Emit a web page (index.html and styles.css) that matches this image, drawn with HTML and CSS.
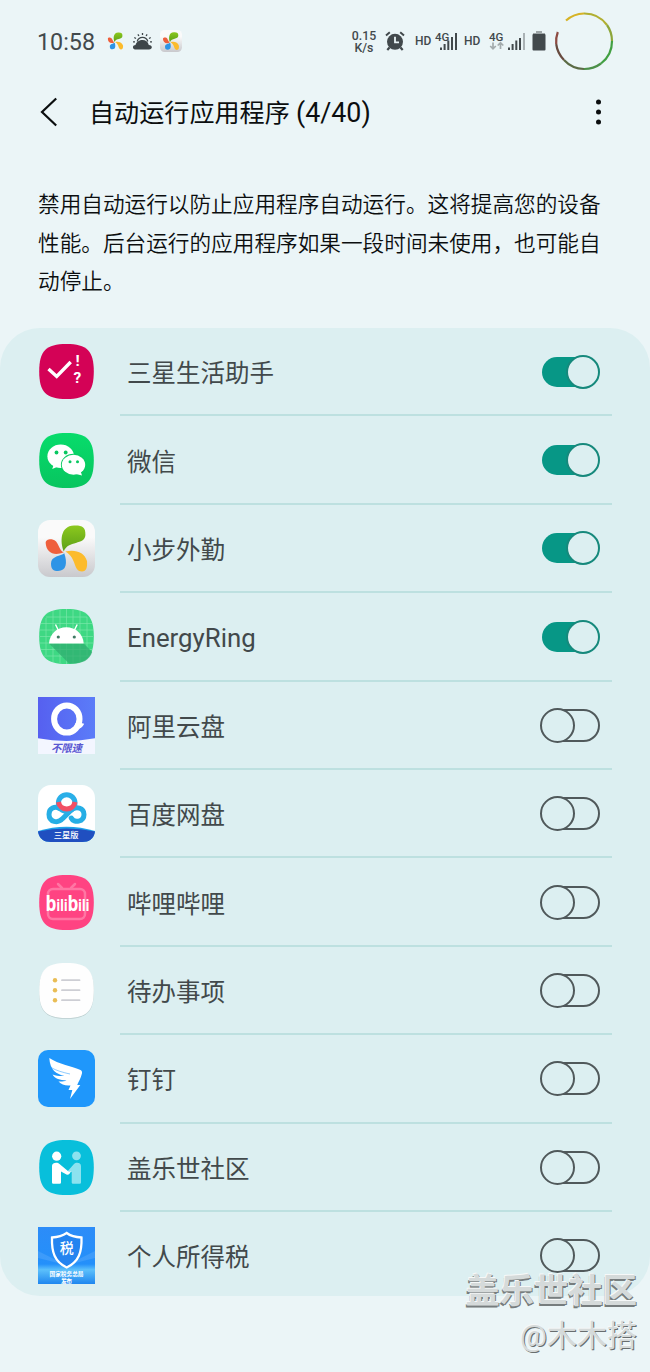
FILE: index.html
```html
<!DOCTYPE html>
<html lang="zh-CN">
<head>
    <meta charset="UTF-8">
    <meta name="viewport" content="width=device-width, initial-scale=1.0">
    <title>自动运行应用程序</title>
    <link rel="stylesheet" href="styles.css">
</head>
<body>
    <!-- 公用图形 -->
    <svg class="defs" width="0" height="0">
        <defs>
            <path id="squircle" d="M28.5 1C49 1 55.8 8 55.8 28.5S49 56 28.5 56 1.2 49 1.2 28.5 8 1 28.5 1z"/>
            <linearGradient id="silver" x1="0" y1="0" x2="0" y2="1"><stop offset=".3" stop-color="#fafafa"/><stop offset="1" stop-color="#c9c9cd"/></linearGradient>
            <linearGradient id="green" x1="0" y1="0" x2="0" y2="1"><stop offset="0" stop-color="#8cc81e"/><stop offset="1" stop-color="#5b9f18"/></linearGradient>
            <linearGradient id="wechat" x1="0" y1="0" x2="0" y2="1"><stop offset="0" stop-color="#07dc6b"/><stop offset="1" stop-color="#08c55f"/></linearGradient>
            <linearGradient id="pan" x1="0" y1="0" x2="1" y2="0"><stop offset="0" stop-color="#5660f0"/><stop offset="1" stop-color="#5b7cf8"/></linearGradient>
            <linearGradient id="tax" x1="0" y1="0" x2="0" y2="1"><stop offset="0" stop-color="#2c8cf8"/><stop offset=".65" stop-color="#2490fa"/><stop offset=".75" stop-color="#5cc0fb"/><stop offset="1" stop-color="#1f86ef"/></linearGradient>
            <g id="petals">
                <path fill="url(#green)" d="M25.8 31.5C22 22 22 6 36 5.6c8-.3 11.8 1.5 11.4 9.4C46.8 25.5 30 20 25.8 31.5z"/>
                <path fill="#ef5f3c" d="M25.8 32.3C21 31 20.5 20 14.5 19.4c-4-.5-7 .8-6.8 3.8C8.3 32 15.5 36.8 25.8 32.3z"/>
                <path fill="#2e94e6" d="M26.3 33.3C23 36 13 36 13 43.5c0 6 2.5 7.5 7 7.5 8.5 0 9.5-8 6.3-17.7z"/>
                <path fill="#fcbb2c" d="M27.3 31.5C37 29 46.5 32 49 41c.5 6-.5 10.5-5 10.5C35 51.5 39 38 27.3 31.5z"/>
            </g>
        </defs>
    </svg>

    <!-- 状态栏 -->
    <header class="status-bar">
        <div class="status-left">
            <span class="clock">10:58</span>
            <svg class="mini-petals" viewBox="6 4 45 49"><use href="#petals"/></svg>
            <svg class="weather" viewBox="0 0 19 17">
                <path d="M4.2 8.5a5.5 5.5 0 0 1 10.6 0" fill="none" stroke="#3e4649" stroke-width="1.3"/>
                <path d="M9.5 0v2M4.9 1.3l1 1.7M14.1 1.3l-1 1.7M1.3 4.5l1.7 1M17.7 4.5l-1.7 1M0 8.8h2M17 8.8h2" stroke="#3e4649" stroke-width="1.3"/>
                <path d="M3 16.5c-4 0-4-4.3-.5-4.5C3.5 8.5 6.5 7 9.5 7S15 8.5 15.8 12c4 0 4 4.5.2 4.5z" fill="#3e4649"/>
            </svg>
            <svg class="mini-app" viewBox="0 0 57 57"><rect width="57" height="57" rx="12" fill="url(#silver)"/><use href="#petals"/></svg>
        </div>
        <div class="status-right">
            <div class="speed"><span>0.15</span><span>K/s</span></div>
            <svg class="alarm" viewBox="0 0 20 20">
                <circle cx="10" cy="10.8" r="8" fill="#42494c"/>
                <path d="M1 4.5L4.8 1.3M19 4.5L15.2 1.3" stroke="#42494c" stroke-width="2"/>
                <path d="M4.5 16.5L2.3 19M15.5 16.5l2.2 2.5" stroke="#42494c" stroke-width="2.2"/>
                <path d="M10 5.8v5.5h4" fill="none" stroke="#ebf5f7" stroke-width="1.8"/>
            </svg>
            <span class="hd">HD</span>
            <svg class="signal-one" viewBox="0 0 24 22">
                <text x="0" y="10.5">4G</text>
                <path d="M6 17.5V20M9.6 14v6M13.3 10.5V20M17 7v13M21 3v17" stroke="#42494c" stroke-width="2"/>
            </svg>
            <span class="hd">HD</span>
            <svg class="signal-two" viewBox="0 0 37 22">
                <text x="0" y="10.5">4G</text>
                <path d="M4 12.5v6M1.2 16L4 18.8 6.8 16M11.5 19v-6M8.7 15.5l2.8-2.8 2.8 2.8" fill="none" stroke="#a3abad" stroke-width="1.7"/>
                <path d="M20 17.5V20M23.6 14v6M27.3 10.5V20M31 8v12" stroke="#42494c" stroke-width="2"/>
                <path d="M35 3v17" stroke="#a3abad" stroke-width="1.8"/>
            </svg>
            <svg class="battery" viewBox="0 0 14 20">
                <path d="M4 0h6v2h3v2H1V2h3z" fill="#9da5a7"/>
                <rect x=".5" y="3" width="13" height="16.5" rx="1" fill="#42494c"/>
            </svg>
            <svg class="ring" viewBox="0 0 60 60" fill="none" stroke-width="2.2">
                <path d="M12 9.5A28 28 0 0 1 30 2.5" stroke="#d6b326"/>
                <path d="M30 2.5A28 28 0 0 1 53 14" stroke="#b1af32"/>
                <path d="M53 14A28 28 0 0 1 58 30" stroke="#8da63a"/>
                <path d="M58 30A28 28 0 0 1 47 52.5" stroke="#42a043"/>
                <path d="M47 52.5A28 28 0 0 1 30 58" stroke="#4c9049"/>
                <path d="M30 58A28 28 0 0 1 10 49" stroke="#5b6b45"/>
                <path d="M10 49A28 28 0 0 1 2.2 33" stroke="#684b40"/>
                <path d="M2.2 33A28 28 0 0 1 3.8 21" stroke="#8d4b42"/>
            </svg>
        </div>
    </header>

    <!-- 标题栏 -->
    <div class="title-bar">
        <svg class="back" viewBox="0 0 18 30"><path d="M16.2 1.5L2 15l14.2 13.5" fill="none" stroke="#0b0e0f" stroke-width="2.2"/></svg>
        <h1>自动运行应用程序 <span class="count">(4/40)</span></h1>
        <svg class="more" viewBox="0 0 6 26" fill="#0b0e0f"><circle cx="3" cy="3" r="2.5"/><circle cx="3" cy="13" r="2.5"/><circle cx="3" cy="23" r="2.5"/></svg>
    </div>

    <p class="description">禁用自动运行以防止应用程序自动运行。这将提高您的设备<br>性能。后台运行的应用程序如果一段时间未使用，也可能自<br>动停止。</p>

    <!-- 应用列表 -->
    <main class="app-list">
        <div class="app-row">
            <svg class="app-icon" viewBox="0 0 57 57">
                <use href="#squircle" fill="#d40256"/>
                <path d="M10.5 26l8.2 7.5 14-14.5" fill="none" stroke="#fff" stroke-width="3.4"/>
                <text class="mark" x="37.5" y="23.3">!</text>
                <text class="mark" x="35.5" y="39.5">?</text>
            </svg>
            <div class="app-body"><span>三星生活助手</span><div class="switch on"><i></i></div></div>
        </div>
        <div class="app-row">
            <svg class="app-icon" viewBox="0 0 57 57">
                <use href="#squircle" fill="url(#wechat)"/>
                <path d="M16 32l-1.8 5 6-2.5z" fill="#fff"/>
                <ellipse cx="22.7" cy="24.2" rx="13.3" ry="11.7" fill="#fff"/>
                <ellipse cx="35.5" cy="32.8" rx="12.6" ry="11" fill="#0acb63"/>
                <ellipse cx="35.5" cy="32.8" rx="11.7" ry="10" fill="#fff"/>
                <path d="M38 42l6 1.5-1.5-4.5z" fill="#fff"/>
                <g fill="#08c760"><circle cx="18.5" cy="20.5" r="1.9"/><circle cx="27.7" cy="20.5" r="1.9"/><circle cx="32" cy="29.7" r="1.5"/><circle cx="39.5" cy="29.7" r="1.5"/></g>
            </svg>
            <div class="app-body"><span>微信</span><div class="switch on"><i></i></div></div>
        </div>
        <div class="app-row">
            <svg class="app-icon" viewBox="0 0 57 57"><rect width="57" height="57" rx="12" fill="url(#silver)"/><use href="#petals"/></svg>
            <div class="app-body"><span>小步外勤</span><div class="switch on"><i></i></div></div>
        </div>
        <div class="app-row">
            <svg class="app-icon" viewBox="0 0 57 57">
                <use href="#squircle" fill="#3ed883"/>
                <path d="M8 10v37M15 3v51M22 2v53M28.5 1v55M35 2v53M42 3v51M49 9v39M8 9h41M3 15.5h51M2 22h53M2 28.5h53M2 35h53M3 41.5h51M6 48h45" stroke="#78e6a9" stroke-width=".7"/>
                <path d="M11 35.5h34.7l8.5 8.5C51 53 44 56 31 55.5z" fill="#2fae6f" opacity=".75"/>
                <path d="M17.5 16.5l3 6M39.2 16.5l-3 6" stroke="#fff" stroke-width="1.4"/>
                <path d="M11 35.5C11.5 26 19 19.3 28.3 19.3S45.2 26 45.7 35.5z" fill="#fff"/>
                <circle cx="20.3" cy="29" r="1.6" fill="#417a64"/><circle cx="36.3" cy="29" r="1.6" fill="#417a64"/>
            </svg>
            <div class="app-body"><span class="latin">EnergyRing</span><div class="switch on"><i></i></div></div>
        </div>
        <div class="app-row">
            <svg class="app-icon" viewBox="0 0 57 57">
                <rect width="57" height="57" fill="#f3f6ff"/>
                <path d="M0 0h57v41.3Q28.5 46.5 0 41.3z" fill="url(#pan)"/>
                <ellipse cx="28.8" cy="22" rx="12.7" ry="13.6" fill="none" stroke="#fff" stroke-width="6"/>
                <path d="M37 27l2.5-3 2 1.5 4.7 1.2c-2 4-3.8 5-7.5 5z" fill="#fff"/>
                <text class="pan-text" x="13" y="55" textLength="31">不限速</text>
            </svg>
            <div class="app-body"><span>阿里云盘</span><div class="switch"><i></i></div></div>
        </div>
        <div class="app-row">
            <svg class="app-icon" viewBox="0 0 57 57">
                <rect width="57" height="57" rx="13" fill="#fff"/>
                <path d="M0 46Q28.5 37.500 57 46C56 54 51 57 44 57H13C6 57 1 54 0 46z" fill="#1fa2ea"/>
                <path d="M0 46.500Q28.5 40.500 57 46.500C56 54 51 57 44 57H13C6 57 1 54 0 46.500z" fill="#204fc0"/>
                <g fill="none" stroke-width="5">
                    <path d="M21.5 23.5C17 20.8 11 23 11 29.2c0 8 9 9.5 13.5 4.5l8.5-8.5c5-4.5 13-2.5 13 4.3 0 7.5-10 9-12.8 3.5" stroke="#26aee5" stroke-linecap="round"/>
                    <circle cx="28.7" cy="18" r="8.3" stroke="#2aafe8"/>
                    <path d="M20.5 17a8.3 8.3 0 0 0 16.4 0" stroke="#f14f64"/>
                </g>
                <text class="baidu-text" x="15.7" y="53.3" textLength="24.8">三星版</text>
            </svg>
            <div class="app-body"><span>百度网盘</span><div class="switch"><i></i></div></div>
        </div>
        <div class="app-row">
            <svg class="app-icon" viewBox="0 0 57 57">
                <use href="#squircle" fill="#ff4382"/>
                <g fill="none" stroke="#ff76a3" stroke-width="2.5" stroke-linecap="round"><rect x="10" y="15" width="37" height="30" rx="5"/><path d="M20 10l4 4M37 10l-4 4"/></g>
                <g transform="translate(7.5 37) scale(.82 1)"><text class="bili-text"><tspan class="big">b</tspan>ili<tspan class="big">b</tspan>ili</text></g>
            </svg>
            <div class="app-body"><span>哔哩哔哩</span><div class="switch"><i></i></div></div>
        </div>
        <div class="app-row">
            <svg class="app-icon" viewBox="0 0 57 57">
                <use href="#squircle" y=".8" fill="#b9cccd"/>
                <use href="#squircle" fill="#fefefe"/>
                <g fill="#e9bd55"><circle cx="17" cy="18.2" r="2.2"/><circle cx="17" cy="28.2" r="2.2"/><circle cx="17" cy="38.2" r="2.2"/></g>
                <path d="M24 18.2h17.5M24 28.2h17.5M24 38.2h17.5" stroke="#cdced4" stroke-width="1.8" stroke-linecap="round"/>
            </svg>
            <div class="app-body"><span>待办事项</span><div class="switch"><i></i></div></div>
        </div>
        <div class="app-row">
            <svg class="app-icon" viewBox="0 0 57 57">
                <rect width="57" height="57" rx="10" fill="#1f97fb"/>
                <path d="M11.3 8C20 14 35 16.5 42.5 20c1.7 1 1.8 2.5 1.3 4-1 4-3 7.5-4.6 11h3.1L32 49l2.3-9h-3.8l2-4.5c-5.5.5-9-1-12-4 3 .3 6-.2 8-1-6.5-.5-11.5-1.500-14-6 4 1.5 8 1.8 12 1.5C18.5 24 12 20.5 11.3 8z" fill="#fff"/>
                <path d="M13 17.5c5 3 12 5 19 6.5" fill="none" stroke="#1f97fb" stroke-width=".5"/>
            </svg>
            <div class="app-body"><span>钉钉</span><div class="switch"><i></i></div></div>
        </div>
        <div class="app-row">
            <svg class="app-icon" viewBox="0 0 57 57">
                <use href="#squircle" fill="#08bfdb"/>
                <g fill="#8be2ef"><circle cx="38.5" cy="16.8" r="4.4"/><path d="M28.5 33.5L36 25c2-2 7-1.5 7 2v16.5q0 1.3-1.3 1.3H35q-1.3 0-1.3-1.3V33z"/></g>
                <g fill="#fff"><circle cx="18.7" cy="17.2" r="4.6"/><path d="M14 27c0-3.5 5.5-4 7.5-2l9 7.5q1.5.8 2.5-.5-1.5 4.5-4.5 3.5L23 32.500v11q0 1.3-1.3 1.3h-6.4Q14 44.8 14 43.5z"/></g>
            </svg>
            <div class="app-body"><span>盖乐世社区</span><div class="switch"><i></i></div></div>
        </div>
        <div class="app-row">
            <svg class="app-icon" viewBox="0 0 57 57">
                <rect width="57" height="57" fill="url(#tax)"/>
                <path d="M0 24l28 14L0 31zM57 24L29 38l28-7z" fill="#53a8fb" opacity=".5"/>
                <path d="M28.7 6Q34 10 43.5 10.5C44 25 41 34.5 28.7 40.5 16.5 34.5 13.5 25 14 10.5 23 10 28.7 6 28.7 6z" fill="#2484f0" stroke="#fff" stroke-width="2.3"/>
                <text class="tax-text" x="21.7" y="26.3">税</text>
                <text class="tax-small" x="11.5" y="49.2" textLength="34">国家税务总局</text>
                <text class="tax-small" x="23" y="55.5" textLength="11">发布</text>
            </svg>
            <div class="app-body"><span>个人所得税</span><div class="switch"><i></i></div></div>
        </div>
    </main>

    <!-- 水印 -->
    <div class="watermark">
        <div class="watermark-site">盖乐世社区</div>
        <div class="watermark-user">@木木搭</div>
    </div>
</body>
</html>
```

FILE: styles.css
```css
/* 全局样式 */
* {
    box-sizing: border-box;
}

body {
    margin: 0;
    position: relative;
    width: 650px;
    height: 1372px;
    overflow: hidden;
    background-color: #ebf5f7;
    color: #0b0e0f;
    font-family: Roboto, "Noto Sans CJK SC", sans-serif;
}

svg {
    display: block;
    flex: none;
}

.defs {
    position: absolute;
}

/* 状态栏 */
.status-bar {
    height: 82px;
    padding: 0 36px 0 37px;
    display: flex;
    justify-content: space-between;
    align-items: center;
    color: #42494c;
}

.status-left, .status-right {
    display: flex;
    align-items: center;
}

.clock {
    width: 70px;
    padding-top: 1px;
    font-size: 23.3px;
    line-height: 28px;
}

.mini-petals {
    width: 17px;
    height: 18px;
    margin-right: 9px;
}

.weather {
    width: 19px;
    height: 17px;
    margin-right: 8px;
}

.mini-app {
    width: 22px;
    height: 22px;
}

.speed {
    display: flex;
    flex-direction: column;
    align-items: center;
    width: 26px;
    margin-right: 8px;
    padding-top: 2px;
    font-size: 12.3px;
    font-weight: 500;
    line-height: 12px;
}

.alarm {
    width: 20px;
    height: 20px;
    margin-right: 10px;
}

.hd {
    width: 17px;
    font-size: 12px;
    font-weight: 500;
}

.signal-one, .signal-two {
    font-size: 11.5px;
    font-weight: 500;
    fill: #42494c;
}

.signal-one {
    width: 24px;
    height: 22px;
    margin: 0 5px 0 3px;
}

.signal-two {
    width: 37px;
    height: 22px;
    margin: 0 6px 0 8px;
}

.battery {
    width: 14px;
    height: 20px;
    margin-right: 8px;
}

.ring {
    width: 60px;
    height: 60px;
}

/* 标题栏 */
.title-bar {
    height: 60px;
    padding: 0 48px 0 40px;
    display: flex;
    align-items: center;
}

.back {
    width: 18px;
    height: 30px;
    margin-right: 31px;
}

.title-bar h1 {
    flex: 1;
    margin: 0;
    padding-top: 3px;
    font-size: 25.1px;
    font-weight: 400;
    line-height: 36px;
}

.count {
    font-size: 26.8px;
}

.more {
    width: 7px;
    height: 26px;
}

.description {
    height: 186px;
    margin: 0;
    padding: 44px 0 0 38px;
    font-size: 21.65px;
    font-weight: 350;
    line-height: 38.5px;
    white-space: nowrap;
}

/* 应用列表 */
.app-list {
    height: 968px;
    overflow: hidden;
    border-radius: 40px;
    background-color: #dceff1;
}

.app-row {
    height: 88.4px;
    padding: 0 38px;
    display: flex;
    align-items: center;
    gap: 25px;
}

.app-icon {
    width: 57px;
    height: 57px;
    margin-bottom: 1px;
}

.app-body {
    flex: 1;
    height: 100%;
    padding: 1px 12px 0 7px;
    display: flex;
    align-items: center;
    justify-content: space-between;
    border-bottom: 2px solid #bde0e0;
    font-size: 24.5px;
    color: #42494b;
}

.app-row:last-child .app-body {
    border-bottom-color: transparent;
}

.latin {
    padding-top: 3px;
    font-size: 25.8px;
}

/* 开关 */
.switch {
    width: 59px;
    height: 33px;
    border: 2px solid #50595b;
    border-radius: 17px;
    display: flex;
    align-items: center;
}

.switch i {
    flex: none;
    width: 35px;
    height: 35px;
    margin-left: -3px;
    border: 2px solid #50595b;
    border-radius: 50%;
    background-color: #dceff1;
}

.switch.on {
    width: 58px;
    height: 30px;
    border: 0;
    justify-content: flex-end;
    background: linear-gradient(90deg, #079786 44px, transparent 44px);
}

.switch.on i {
    width: 34px;
    height: 34px;
    margin: 0;
    border-color: #16897c;
}

/* 图标里的文字 */
.mark {
    font-size: 15.5px;
    font-weight: 700;
    fill: #fff;
}

.pan-text {
    font-size: 10.5px;
    font-style: italic;
    font-weight: 700;
    fill: #5a58d2;
}

.baidu-text {
    font-size: 8.3px;
    font-weight: 500;
    fill: #fff;
}

.bili-text {
    font-family: "Open Sans", sans-serif;
    font-size: 16px;
    font-weight: 700;
    letter-spacing: -0.3px;
    fill: #fff;
}

.bili-text .big {
    font-size: 21px;
}

.tax-text {
    font-size: 14px;
    font-weight: 500;
    fill: #fff;
}

.tax-small {
    font-size: 5.7px;
    font-weight: 700;
    fill: #fff;
}

/* 水印 */
.watermark {
    position: absolute;
    right: 13px;
    bottom: 14px;
    text-align: right;
    color: #d5dada;
}

.watermark-site {
    font-size: 34.3px;
    font-weight: 700;
    line-height: 46px;
    text-shadow: -1px -1px 0 #f6f8f8, 1px 1px 0 #777d7e, -1px 2px 0 #777d7e;
}

.watermark-user {
    font-size: 30px;
    line-height: 44px;
    text-shadow: -1px -1px 0 #f6f8f8, 1px 1px 0 #686e6f;
}
```
